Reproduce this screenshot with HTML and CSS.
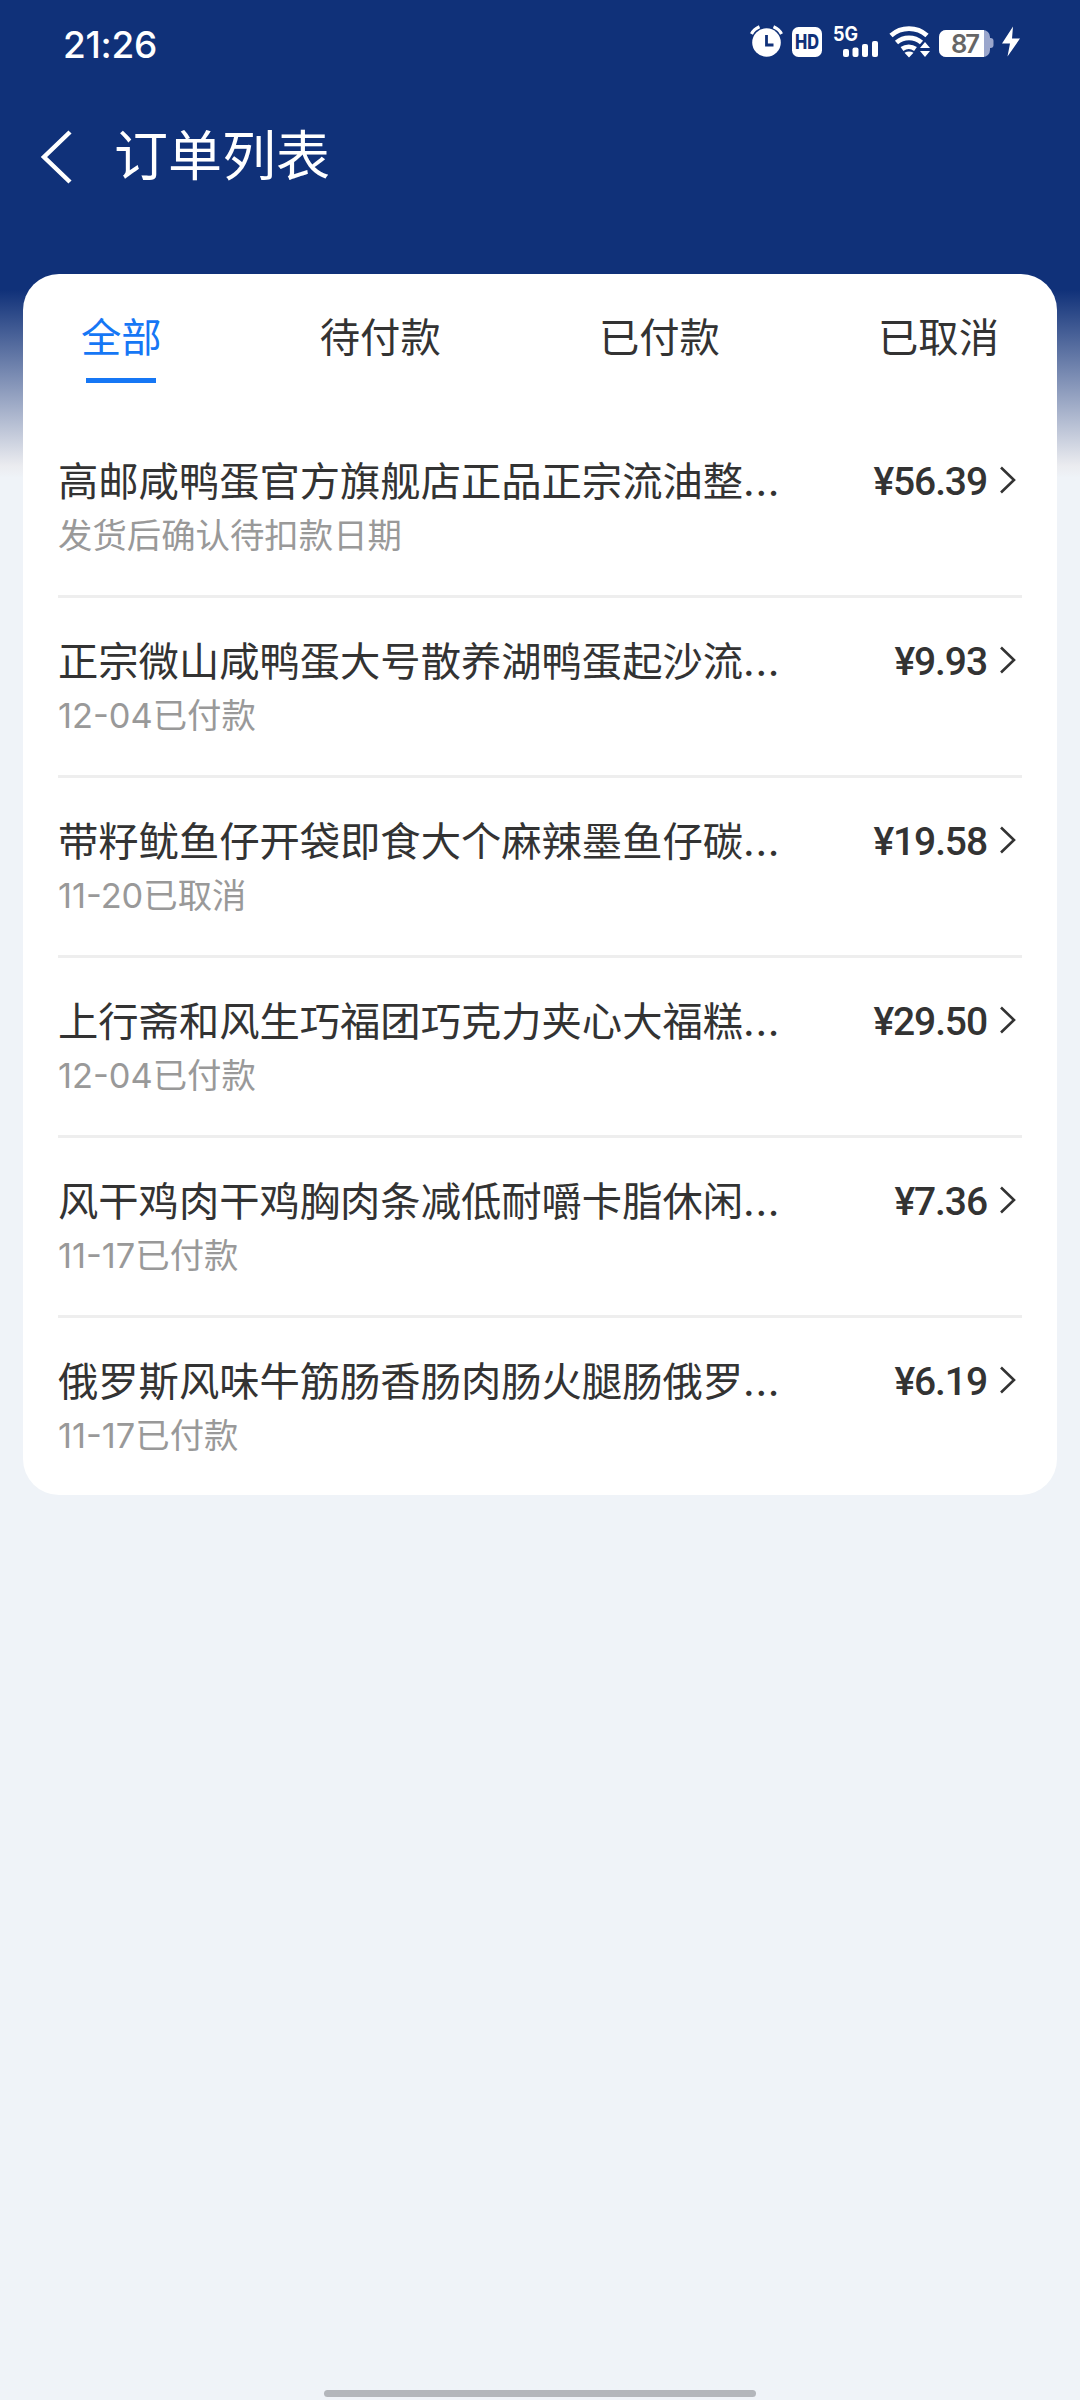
FILE: index.html
```html
<!DOCTYPE html>
<html lang="zh-CN">
<head>
<meta charset="utf-8">
<title>订单列表</title>
<link rel="stylesheet" href="styles.css">
</head>
<body>
<div class="screen">
  <div class="status">
    <span class="time">21:26</span>
    <svg class="status-icons" width="276" height="40" viewBox="0 0 276 40">
      <g fill="#fff">
        <circle cx="16.500" cy="22.500" r="14.300"/>
        <path d="M1.500 14q2.500-5 8-7.200M23.500 6.800q5.500 2.200 8 7.200" fill="none" stroke="#fff" stroke-width="3.200"/>
        <path d="M16.500 15v10h7" fill="none" stroke="#103179" stroke-width="2.800"/>
        <rect x="42" y="7" width="30" height="30" rx="6.500"/>
        <text class="hd" x="57" y="28.500" text-anchor="middle" textLength="24" lengthAdjust="spacingAndGlyphs">HD</text>
        <text class="net" x="83" y="21" textLength="25" lengthAdjust="spacingAndGlyphs">5G</text>
        <rect x="93" y="29" width="6" height="8" rx="2"/>
        <rect x="102.500" y="27.500" width="6" height="9.500" rx="2"/>
        <rect x="112" y="24" width="6" height="13" rx="2"/>
        <rect x="122" y="21" width="6" height="16" rx="2"/>
        <path d="M141 15.500a27 27 0 0 1 36 0M146.500 22.500a19 19 0 0 1 25 0M152 29a11.500 11.500 0 0 1 13.500 0" fill="none" stroke="#fff" stroke-width="4.800"/>
        <path d="M154.500 32.800q4.500-2.500 9 0l-4.500 4.700zM170 28l5-6 5 6zM170 31l5 6 5-6z"/>
        <rect x="235" y="18" width="8.500" height="10" rx="3" fill="#9aa6cc"/>
        <rect x="189" y="10" width="51" height="27" rx="7" fill="#9aa6cc"/>
        <path d="M196 10h38v27h-38a7 7 0 0 1-7-7V17a7 7 0 0 1 7-7z"/>
        <text class="battery" x="215.500" y="33" text-anchor="middle" textLength="29">87</text>
        <path d="M263 6.500l-11 17h8l-2.500 13 12.500-18h-8z"/>
      </g>
    </svg>
  </div>
  <header class="header">
    <svg class="back" width="34" height="56" viewBox="0 0 34 56"><path d="M31 3L5 28l26 25" fill="none" stroke="#fff" stroke-width="4.500"/></svg>
    <h1 class="heading">订单列表</h1>
  </header>
  <main class="card">
    <nav class="tabs">
      <span class="tab active">全部</span>
      <span class="tab">待付款</span>
      <span class="tab">已付款</span>
      <span class="tab">已取消</span>
    </nav>
    <ul class="orders">
      <li class="order"><div class="line"><span class="name">高邮咸鸭蛋官方旗舰店正品正宗流油整<i class="dots">...</i></span><span class="price">¥56.39</span><svg class="arrow" viewBox="0 0 18 28"><path d="M2 1.500L15 14 2 26.500"/></svg></div><div class="state">发货后确认待扣款日期</div></li>
      <li class="order"><div class="line"><span class="name">正宗微山咸鸭蛋大号散养湖鸭蛋起沙流<i class="dots">...</i></span><span class="price">¥9.93</span><svg class="arrow" viewBox="0 0 18 28"><path d="M2 1.500L15 14 2 26.500"/></svg></div><div class="state">12-04已付款</div></li>
      <li class="order"><div class="line"><span class="name">带籽鱿鱼仔开袋即食大个麻辣墨鱼仔碳<i class="dots">...</i></span><span class="price">¥19.58</span><svg class="arrow" viewBox="0 0 18 28"><path d="M2 1.500L15 14 2 26.500"/></svg></div><div class="state">11-20已取消</div></li>
      <li class="order"><div class="line"><span class="name">上行斋和风生巧福团巧克力夹心大福糕<i class="dots">...</i></span><span class="price">¥29.50</span><svg class="arrow" viewBox="0 0 18 28"><path d="M2 1.500L15 14 2 26.500"/></svg></div><div class="state">12-04已付款</div></li>
      <li class="order"><div class="line"><span class="name">风干鸡肉干鸡胸肉条减低耐嚼卡脂休闲<i class="dots">...</i></span><span class="price">¥7.36</span><svg class="arrow" viewBox="0 0 18 28"><path d="M2 1.500L15 14 2 26.500"/></svg></div><div class="state">11-17已付款</div></li>
      <li class="order"><div class="line"><span class="name">俄罗斯风味牛筋肠香肠肉肠火腿肠俄罗<i class="dots">...</i></span><span class="price">¥6.19</span><svg class="arrow" viewBox="0 0 18 28"><path d="M2 1.500L15 14 2 26.500"/></svg></div><div class="state">11-17已付款</div></li>
    </ul>
  </main>
  <div class="home-bar"></div>
</div>
</body>
</html>
```
FILE: styles.css
```css
* { box-sizing: border-box; margin: 0; padding: 0; }
body { background: #eff3f8; }
.screen {
  display: flex;
  flex-direction: column;
  width: 1080px;
  height: 2400px;
  padding: 0 23px;
  background: linear-gradient(#103179 0, #103179 290px, #ebecf0 466px, #eff3f8 478px);
  font-family: Inter, "Noto Sans CJK SC", sans-serif;
  color: #333;
}
.status {
  display: flex;
  justify-content: space-between;
  height: 88px;
  padding: 20px 31px 0 40px;
}
.time {
  font-size: 37px;
  font-weight: 500;
  line-height: 49px;
  letter-spacing: -0.3px;
  color: #fff;
}
.hd { font: 800 20px Inter, sans-serif; fill: #103179; }
.net { font: 700 19.5px Inter, sans-serif; }
.battery { font: 600 25.5px Inter, sans-serif; fill: #666; }
.header {
  display: flex;
  align-items: center;
  height: 186px;
  padding: 0 0 49px 16px;
}
.heading {
  margin: 1px 0 0 41px;
  font-size: 54px;
  font-weight: 400;
  line-height: 70px;
  color: #fff;
}
.card {
  height: 1221px;
  padding: 0 35px;
  border-radius: 36px;
  background: #fff;
}
.tabs {
  display: flex;
  justify-content: space-between;
  height: 144px;
  padding: 34px 23px 0;
}
.tab {
  height: 75px;
  font-size: 40.3px;
  line-height: 60px;
}
.active {
  display: flex;
  flex-direction: column;
  align-items: center;
  justify-content: space-between;
  color: #1677f5;
}
.active::after { content: ""; width: 70px; height: 5px; background: #1677f5; }
.orders { list-style: none; }
.order {
  height: 180px;
  padding: 34px 5px 0 0;
  border-bottom: 3px solid #eee;
}
.order:last-child { border-bottom: 0; }
.line { display: flex; align-items: center; height: 60px; }
.name {
  flex: 1;
  font-size: 40.3px;
  line-height: 60px;
  white-space: nowrap;
}
.dots { font-style: normal; letter-spacing: 0.8px; }
.price {
  margin-top: -1px;
  font-family: Roboto, sans-serif;
  font-size: 39px;
  font-weight: 500;
  line-height: 60px;
  letter-spacing: -1.1px;
}
.arrow {
  width: 18px;
  height: 28px;
  margin: -4px 0 0 12px;
  fill: none;
  stroke: #333;
  stroke-width: 2.6;
}
.state {
  font-size: 34.4px;
  line-height: 48px;
  color: #999;
}
.home-bar {
  width: 432px;
  height: 7px;
  margin: auto auto 3px;
  border-radius: 4px;
  background: #b3b6bb;
}
```
